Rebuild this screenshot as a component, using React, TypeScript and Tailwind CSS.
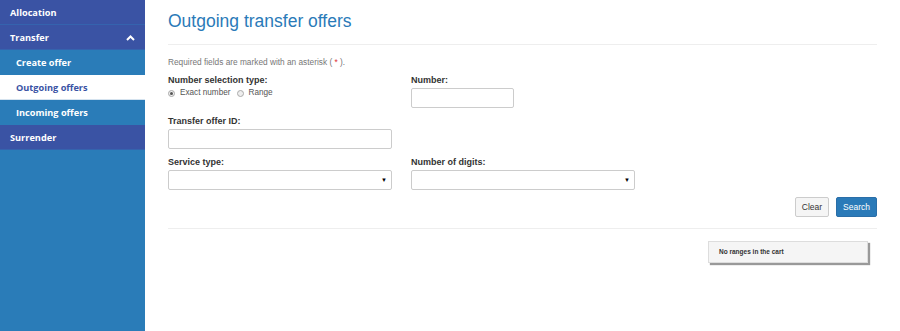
import React from "react";

const navItems = [
  { label: "Allocation", level: 0 },
  { label: "Transfer", level: 0, open: true },
  { label: "Create offer", level: 1 },
  { label: "Outgoing offers", level: 1, active: true },
  { label: "Incoming offers", level: 1 },
  { label: "Surrender", level: 0 },
];

function Sidebar() {
  return (
    <aside className="w-[145px] shrink-0 bg-[#2a7cb8] font-['Open_Sans',sans-serif] text-[9.2px] font-bold">
      {navItems.map((item) => {
        if (item.level === 0) {
          return (
            <div
              key={item.label}
              className="flex h-[25px] items-center justify-between border-b border-[#3563ae] bg-[#3a53a4] pt-[1px] pl-[10px] pr-[9px] text-white"
            >
              <span>{item.label}</span>
              {item.open && (
                <svg width="9" height="6" viewBox="0 0 9 6" className="mr-[1px]">
                  <path d="M1 5 L4.5 1.5 L8 5" stroke="white" strokeWidth="2" fill="none" />
                </svg>
              )}
            </div>
          );
        }
        return (
          <div
            key={item.label}
            className={
              item.active
                ? "flex h-[25px] items-center border-b border-[#d5e3ef] bg-white pt-[1px] pl-[16px] text-[#3a53a4]"
                : "flex h-[25px] items-center border-b border-[#2a7cb8] bg-[#2a7cb8] pt-[1px] pl-[16px] text-white"
            }
          >
            {item.label}
          </div>
        );
      })}
    </aside>
  );
}

function Label({ children }: { children: React.ReactNode }) {
  return <div className="h-[12px] text-[9px] font-bold leading-[12px] text-[#333]">{children}</div>;
}

function TextInput({ className }: { className: string }) {
  return <div className={"h-[20px] rounded-[2px] border border-[#ccc] bg-white " + className} />;
}

function SelectBox() {
  return (
    <div className="flex h-[20px] w-[224px] items-center justify-end rounded-[2px] border border-[#ccc] bg-white pr-[4px]">
      <span className="text-[6px] leading-none text-black">▼</span>
    </div>
  );
}

function Radio({ checked, label }: { checked?: boolean; label: string }) {
  return (
    <label className="flex items-center gap-[5px]">
      <span className="flex h-[7px] w-[7px] items-center justify-center rounded-full border border-[#aaa] bg-[#eee]">
        {checked && <span className="h-[3px] w-[3px] rounded-full bg-[#555]" />}
      </span>
      <span>{label}</span>
    </label>
  );
}

export default function App() {
  return (
    <div className="flex min-h-[331px] w-full bg-white font-['Liberation_Sans',Arial,sans-serif]">
      <Sidebar />
      <main className="flex-1 px-[23px] pt-[10px]">
        <h1 className="text-[17.5px] leading-[22px] font-normal text-[#2a7ab8]">Outgoing transfer offers</h1>
        <div className="mt-[12px] border-t border-[#eee]" />

        <p className="mt-[11px] text-[8.3px] leading-[12px] text-[#777]">
          Required fields are marked with an asterisk ( <span className="text-[#d33]">*</span> ).
        </p>

        <div className="mt-[6px] grid w-[467px] grid-cols-[224px_224px] gap-x-[19px] gap-y-[7px]">
          <div>
            <Label>Number selection type:</Label>
            <div className="mt-[1px] flex h-[12px] items-center gap-[6px] text-[8.2px] text-[#555]">
              <Radio checked label="Exact number" />
              <Radio label="Range" />
            </div>
          </div>
          <div>
            <Label>Number:</Label>
            <TextInput className="mt-[2px] w-[103px]" />
          </div>

          <div>
            <Label>Transfer offer ID:</Label>
            <TextInput className="mt-[2px] w-[224px]" />
          </div>
          <div />

          <div>
            <Label>Service type:</Label>
            <div className="mt-[2px]">
              <SelectBox />
            </div>
          </div>
          <div>
            <Label>Number of digits:</Label>
            <div className="mt-[2px]">
              <SelectBox />
            </div>
          </div>
        </div>

        <div className="mt-[7px] flex justify-end gap-[7px]">
          <button className="h-[20px] rounded-[2px] border border-[#ccc] bg-[#f5f5f5] px-[6px] text-[8.5px] text-[#333]">
            Clear
          </button>
          <button className="h-[20px] rounded-[2px] border border-[#2a6ea8] bg-[#2a7ab8] px-[6px] text-[8.5px] text-white">
            Search
          </button>
        </div>

        <div className="mt-[11px] border-t border-[#eee]" />

        <div className="mt-[12px] flex justify-end pr-[9px]">
          <div className="flex h-[22px] w-[160px] items-center border border-[#ddd] bg-[#f5f5f5] pl-[10px] text-[6.5px] font-bold text-[#333] shadow-[2px_2px_1px_#999]">
            No ranges in the cart
          </div>
        </div>
      </main>
    </div>
  );
}
